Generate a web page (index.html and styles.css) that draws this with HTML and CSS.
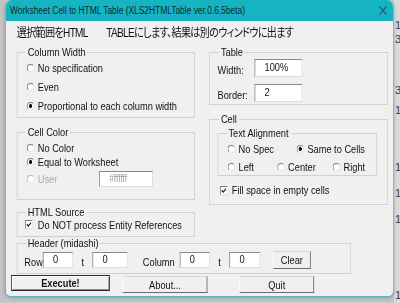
FILE: index.html
```html
<!DOCTYPE html>
<html lang="ja">
<head>
    <meta charset="UTF-8">
    <meta name="viewport" content="width=device-width, initial-scale=1.0">
    <title>Worksheet Cell to HTML Table</title>
    <link rel="stylesheet" href="styles.css">
</head>
<body>

<div class="desk">
    <div class="edge-left"></div>

    <div class="frame">
        <div class="window">
            <div class="titlebar">
                <span class="title">Worksheet Cell to HTML Table (XLS2HTMLTable ver.0.6.5beta)</span>
                <svg class="close" width="10" height="9" viewBox="0 0 10 9">
                    <path d="M1 .5 L9 8.5 M9 .5 L1 8.5" stroke="#1d5a62" stroke-width="1.2" fill="none"/>
                </svg>
            </div>

            <div class="content">
                <p class="intro">選択範囲をHTML　　TABLEにします、結果は別のウィンドウに出ます</p>

                <div class="columns">
                    <div class="col-left">
                        <!-- Column Width -->
                        <fieldset class="group width-group">
                            <legend>Column Width</legend>
                            <div class="opt r19"><span class="radio"></span>No specification</div>
                            <div class="opt r19"><span class="radio"></span>Even</div>
                            <div class="opt r19"><span class="radio on"></span>Proportional to each column width</div>
                        </fieldset>

                        <!-- Cell Color -->
                        <fieldset class="group color-group">
                            <legend>Cell Color</legend>
                            <div class="opt r14"><span class="radio"></span>No Color</div>
                            <div class="opt r14"><span class="radio on"></span>Equal to Worksheet</div>
                            <div class="opt r20">
                                <span class="opt user-opt off"><span class="radio"></span>User</span>
                                <input type="text" class="field hex" value="#ffffff">
                            </div>
                        </fieldset>

                        <!-- HTML Source -->
                        <fieldset class="group src-group">
                            <legend>HTML Source</legend>
                            <div class="opt r13 src-opt"><span class="check"><svg width="7" height="7" viewBox="0 0 7 7"><path d="M1 3.3 L2.8 5.1 L6 1.6" stroke="#111" stroke-width="1.3" fill="none"/></svg></span>Do NOT process Entity References</div>
                        </fieldset>
                    </div>

                    <div class="col-right">
                        <!-- Table -->
                        <fieldset class="group table-group">
                            <legend>Table</legend>
                            <div class="field-row"><span class="field-label">Width:</span><input type="text" class="field wide" value="100%"></div>
                            <div class="field-row second"><span class="field-label">Border:</span><input type="text" class="field wide" value="2"></div>
                        </fieldset>

                        <!-- Cell -->
                        <fieldset class="group cell-group">
                            <legend>Cell</legend>
                            <fieldset class="group align-group">
                                <legend>Text Alignment</legend>
                                <div class="opt r19">
                                    <span class="opt w82"><span class="radio"></span>No Spec</span>
                                    <span class="opt"><span class="radio on"></span>Same to Cells</span>
                                </div>
                                <div class="opt r17">
                                    <span class="opt w59"><span class="radio"></span>Left</span>
                                    <span class="opt w66"><span class="radio"></span>Center</span>
                                    <span class="opt"><span class="radio"></span>Right</span>
                                </div>
                            </fieldset>
                            <div class="opt r18 fill-opt"><span class="check"><svg width="7" height="7" viewBox="0 0 7 7"><path d="M1 3.3 L2.8 5.1 L6 1.6" stroke="#111" stroke-width="1.3" fill="none"/></svg></span>Fill space in empty cells</div>
                        </fieldset>
                    </div>
                </div>

                <!-- Header (midashi) -->
                <fieldset class="group hdr-group">
                    <legend>Header (midashi)</legend>
                    <div class="hdr-row">
                        <span class="hdr-label">Row</span>
                        <input type="text" class="field f36" value="0">
                        <span class="hdr-label to">t</span>
                        <input type="text" class="field f42" value="0">
                        <span class="hdr-label col-label">Column</span>
                        <input type="text" class="field f36" value="0">
                        <span class="hdr-label to">t</span>
                        <input type="text" class="field f37" value="0">
                        <button class="btn clear">Clear</button>
                    </div>
                </fieldset>

                <div class="actions">
                    <button class="btn execute">Execute!</button>
                    <button class="btn about">About...</button>
                    <button class="btn quit">Quit</button>
                </div>
            </div>
        </div>
    </div>

    <div class="edge-right">
        <div class="digit d1">1</div>
        <div class="digit">3</div>
        <div class="digit d3">3</div>
        <div class="digit d4">1</div>
        <div class="digit d5">1</div>
        <div class="digit d6">1</div>
        <div class="digit d6">1</div>
        <div class="digit d8">1</div>
    </div>
</div>

</body>
</html>
```

FILE: styles.css
```css
body {
    margin: 0;
    background-color: #c6c6c6;
    font-family: "Liberation Sans", Arial, sans-serif;
    font-size: 11px;
    color: #111;
    overflow: hidden;
}
.desk {
    display: flex;
    height: 303px;
}
.edge-left {
    width: 5px;
    flex: none;
    background-color: #c3c3c3;
}
.edge-right {
    flex: 1;
    background-color: #dadada;
    overflow: hidden;
    color: #3a3a3a;
    padding-top: 18px;
}
.digit {
    height: 14px;
    line-height: 14px;
    padding-left: 1px;
}
.d3 { margin-top: 37px; }
.d4 { margin-top: 6px; }
.d5 { margin-top: 43px; }
.d6 { margin-top: 12px; }
.d8 { margin-top: 62px; }

/* the dialog is laid out wide, then squeezed like the screenshot */
.frame {
    width: 389px;
    height: 297px;
    flex: none;
}
.window {
    width: 463px;
    height: 297px;
    box-sizing: border-box;
    transform: scaleX(.84);
    transform-origin: 0 0;
    background-color: #f0f0f0;
    border: 1px solid #5ab8c1;
    border-top: 0;
    border-radius: 8px 8px 6px 6px;
    overflow: hidden;
    box-shadow: 0 1px 4px rgba(0,0,0,0.25);
}
.titlebar {
    height: 21px;
    display: flex;
    align-items: center;
    justify-content: space-between;
    padding: 0 7px 0 5px;
    background-color: #16b4c2;
    font-size: 10px;
}
.title {
    color: #0c2a30;
}
.content {
    padding: 5px 6px 0 13px;
}
.intro {
    margin: 0 0 6px;
    font-family: "Liberation Sans", "Noto Sans CJK JP", sans-serif;
    font-size: 12px;
    line-height: 14px;
    letter-spacing: -0.8px;
    font-feature-settings: "palt";
}
.columns {
    display: flex;
    gap: 17px;
    align-items: flex-start;
}
.col-left {
    width: 212px;
}
.col-right {
    width: 213px;
}

/* group boxes */
.group {
    margin: 0;
    padding: 0 6px 0 11px;
    border: 1px solid #d0d0d0;
    min-width: 0;
    box-sizing: border-box;
}
.group legend {
    padding: 0 2px;
    margin-left: -1px;
    line-height: 12px;
    font-size: 11px;
}
.width-group {
    padding-bottom: 2px;
}
.color-group {
    margin-top: 8px;
    padding-top: 3px;
    padding-bottom: 10px;
}
.src-group {
    margin-top: 6px;
    padding-bottom: 5px;
}
.table-group {
    padding: 1px 6px 2px 9px;
}
.table-group legend,
.cell-group legend {
    margin-left: 2px;
}
.cell-group {
    margin-top: 8px;
    padding: 2px 6px 5px 9px;
}
.cell-group .align-group {
    width: 190px;
    padding: 0 6px 0 11px;
}
.cell-group .align-group legend {
    margin-left: -1px;
}
.hdr-group {
    width: 398px;
    padding: 1px 6px 3px 8px;
}
.hdr-group legend {
    margin-left: 2px;
}

/* option rows */
.opt {
    display: flex;
    align-items: center;
}
.r13 { height: 13px; }
.r14 { height: 14px; }
.r17 { height: 17px; }
.r18 { height: 18px; }
.r19 { height: 19px; }
.r20 { height: 20px; }
.w82 { width: 82px; }
.w59 { width: 59px; }
.w66 { width: 66px; }
.user-opt {
    width: 86px;
}
.off {
    color: #a8a8a8;
}
.radio {
    flex: none;
    width: 9px;
    height: 8px;
    margin-right: 4px;
    box-sizing: border-box;
    border-radius: 50%;
    border: 1px solid;
    border-color: #7d7d7d #e4e4e4 #e4e4e4 #7d7d7d;
    background-color: #fff;
}
.radio.on {
    background: radial-gradient(circle, #111 0 1.6px, #fff 2.3px);
}
.off .radio {
    border-color: #b8b8b8 #ececec #ececec #b8b8b8;
}
.check {
    flex: none;
    display: flex;
    align-items: center;
    justify-content: center;
    width: 9px;
    height: 9px;
    box-sizing: border-box;
    border: 1px solid;
    border-color: #7d7d7d #e4e4e4 #e4e4e4 #7d7d7d;
    background-color: #fff;
}
.src-opt .check {
    margin: 0 6px 0 -2px;
}
.fill-opt {
    margin-top: 5px;
}
.fill-opt .check {
    margin: 0 5px 0 3px;
}

/* text fields */
.field {
    font-family: inherit;
    font-size: 11px;
    color: #111;
    height: 16px;
    padding: 0 0 2px 11px;
    margin: 0;
    box-sizing: border-box;
    border: 1px solid;
    border-color: #8a8a8a #dcdcdc #dcdcdc #8a8a8a;
    background-color: #fff;
    outline: none;
}
.hex {
    width: 64px;
    color: #9c9c9c;
    font-size: 10px;
}
.field-row {
    display: flex;
    align-items: center;
    height: 18px;
}
.field-row.second {
    margin-top: 7px;
}
.field-label {
    width: 44px;
    padding-top: 3px;
}
.wide {
    width: 57px;
    height: 18px;
}
.hdr-row {
    display: flex;
    align-items: center;
    height: 20px;
}
.hdr-label {
    margin-top: 4px;
}
.to {
    margin: 4px 10px 0;
}
.col-label {
    margin: 4px 6px 0 18px;
}
.f36 { width: 36px; }
.f37 { width: 37px; }
.f42 { width: 42px; }

/* buttons */
.btn {
    font-family: inherit;
    font-size: 11px;
    color: #111;
    margin: 0;
    padding: 0;
    box-sizing: border-box;
    background-color: #f0f0f0;
    border: 1px solid;
    border-color: #d4d4d4 #6a6a6a #6a6a6a #fff;
}
.clear {
    width: 45px;
    height: 18px;
    margin-left: 15px;
}
.actions {
    display: flex;
    align-items: flex-start;
    margin: 1px 0 0 -7px;
}
.execute {
    width: 118px;
    height: 16px;
    font-weight: bold;
    border-color: #2a2a2a;
    box-shadow: inset 1px 1px #fff, inset -1px -1px #8a8a8a;
}
.about {
    width: 101px;
    height: 17px;
    margin: 1px 0 0 15px;
}
.quit {
    width: 89px;
    height: 17px;
    margin: 1px 0 0 38px;
}
```
